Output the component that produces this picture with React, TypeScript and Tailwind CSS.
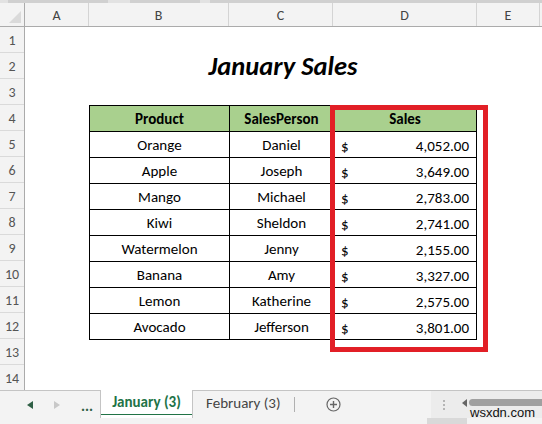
import React from "react";

const rows = [
  ["Orange", "Daniel", "4,052.00"],
  ["Apple", "Joseph", "3,649.00"],
  ["Mango", "Michael", "2,783.00"],
  ["Kiwi", "Sheldon", "2,741.00"],
  ["Watermelon", "Jenny", "2,155.00"],
  ["Banana", "Amy", "3,327.00"],
  ["Lemon", "Katherine", "2,575.00"],
  ["Avocado", "Jefferson", "3,801.00"],
];

const cols: [string, string][] = [
  ["A", "w-[64px]"],
  ["B", "w-[140px]"],
  ["C", "w-[104px]"],
  ["D", "w-[144px]"],
  ["E", "w-[63px]"],
  ["", "w-[10px]"],
];

export default function App() {
  return (
    <div
      className="w-[542px] h-[424px] overflow-hidden bg-white flex flex-col"
      style={{ fontFamily: "Carlito, Lato, 'Open Sans', sans-serif" }}
    >
      {/* top strip */}
      <div className="h-[3px] bg-[#e2e2e2] flex shrink-0">
        <div className="w-[8px]" />
        <div className="w-[100px] bg-[#d0d0d0]" />
        <div className="w-[22px]" />
        <div className="w-[70px] bg-[#d0d0d0]" />
        <div className="w-[10px]" />
        <div className="flex-1 bg-[#d0d0d0]" />
      </div>
      {/* column header */}
      <div className="h-[24px] flex shrink-0 bg-[#f3f3f3] border-b border-[#ababab]">
        <div className="w-[25px] border-r border-[#ababab] relative shrink-0">
          <svg className="absolute right-[3px] bottom-[3px]" width="12" height="12" viewBox="0 0 12 12">
            <polygon points="12,0 12,12 0,12" fill="#dadada" />
          </svg>
        </div>
        {cols.map(([c, w], i) => (
          <div
            key={i}
            className={`${w} shrink-0 border-r border-[#d4d4d4] flex items-center justify-center text-[14px] text-[#444] pt-[1px]`}
          >
            {c}
          </div>
        ))}
      </div>
      {/* body */}
      <div className="h-[363px] flex shrink-0 overflow-hidden">
        <div className="w-[25px] shrink-0 bg-[#f3f3f3] border-r border-[#ababab] flex flex-col">
          {Array.from({ length: 14 }).map((_, i) => (
            <div
              key={i}
              className="h-[26px] shrink-0 border-b border-[#dadada] flex items-center justify-center text-[14px] text-[#555] pt-[2px]"
            >
              {i + 1}
            </div>
          ))}
        </div>
        <div className="flex-1 relative flex flex-col">
          <div className="h-[26px] shrink-0" />
          <div className="h-[26px] shrink-0 ml-[64px] w-[388px] flex items-center justify-center">
            <span className="text-[26.5px] font-bold italic text-black leading-none pt-[1px]">January Sales</span>
          </div>
          <div className="h-[26px] shrink-0" />
          <div className="ml-[64px] w-[388px] border-l border-t border-black shrink-0">
            <div className="grid grid-cols-[140px_104px_143px] bg-[#a9d08e]">
              {["Product", "SalesPerson", "Sales"].map((h) => (
                <div
                  key={h}
                  className="h-[26px] border-r border-b border-black flex items-center justify-center text-[15px] font-bold text-black pt-[1px]"
                >
                  {h}
                </div>
              ))}
            </div>
            {rows.map(([p, s, v]) => (
              <div key={p} className="grid grid-cols-[140px_104px_143px]">
                <div className="h-[26px] border-r border-b border-black flex items-center justify-center text-[15px] text-black pt-[1px]">
                  {p}
                </div>
                <div className="h-[26px] border-r border-b border-black flex items-center justify-center text-[15px] text-black pt-[1px]">
                  {s}
                </div>
                <div className="h-[26px] border-r border-b border-black flex items-center justify-between pl-[7px] pr-[7px] text-[15px] text-black pt-[3px]">
                  <span>$</span>
                  <span>{v}</span>
                </div>
              </div>
            ))}
          </div>
          {/* red highlight box */}
          <div className="absolute left-[305px] top-[78px] w-[158px] h-[247px] border-[5px] border-[#e21f26]" />
        </div>
      </div>
      {/* tab bar */}
      <div className="h-[28px] shrink-0 flex bg-[#f3f3f3] relative">
        <div className="w-[100px] border-t border-[#c4c4c4] flex items-center">
          <svg className="ml-[27px]" width="6" height="8" viewBox="0 0 6 8">
            <polygon points="6,0 6,8 0,4" fill="#2f5f45" />
          </svg>
          <svg className="ml-[21px]" width="6" height="8" viewBox="0 0 6 8">
            <polygon points="0,0 0,8 6,4" fill="#c8c8c8" />
          </svg>
          <span className="ml-[21px] text-[15px] font-bold text-[#2f5f45] leading-none mt-[4px]">...</span>
        </div>
        <div className="w-[93px] bg-white border-l border-r border-[#c4c4c4] flex flex-col">
          <div className="flex-1 flex items-center justify-center text-[15px] font-bold text-[#217346] pt-[1px]">
            January (3)
          </div>
          <div className="h-[3px] bg-[#217346] mb-[4px]" />
        </div>
        <div className="flex-1 border-t border-[#c4c4c4] flex items-center">
          <span className="ml-[13px] text-[15px] text-[#444] pb-[2px]">February (3)</span>
          <div className="ml-[13px] w-px h-[15px] bg-[#b0b0b0]" />
          <svg className="ml-[31px]" width="15" height="15" viewBox="0 0 15 15">
            <circle cx="7.5" cy="7.5" r="6.5" fill="none" stroke="#666" strokeWidth="1.2" />
            <path d="M7.5 4 V11 M4 7.5 H11" stroke="#666" strokeWidth="1.4" />
          </svg>
          <div className="ml-auto w-[111px] h-full bg-[#ececec] flex items-center relative">
            <div className="ml-[12px] flex flex-col gap-[2px]">
              <div className="w-[2px] h-[2px] bg-[#b5b5b5]" />
              <div className="w-[2px] h-[2px] bg-[#b5b5b5]" />
              <div className="w-[2px] h-[2px] bg-[#b5b5b5]" />
            </div>
            <svg className="ml-[17px] mb-[4px]" width="5" height="8" viewBox="0 0 5 8">
              <polygon points="5,0 5,8 0,4" fill="#666" />
            </svg>
            <div className="ml-[2px] flex-1 h-[7px] bg-[#a0a0a0] rounded-l-[4px] mb-[4px]" />
            <span
              className="absolute left-[39px] top-[15px] text-[13px] leading-none text-[#111]"
              style={{ fontFamily: "'Liberation Sans', sans-serif" }}
            >
              wsxdn.com
            </span>
          </div>
        </div>
      </div>
      {/* status bar */}
      <div className="flex-1 bg-[#f3f3f3] flex">
        <div className="ml-[427px] w-[40px] bg-[#d9d9d9]" />
      </div>
    </div>
  );
}
